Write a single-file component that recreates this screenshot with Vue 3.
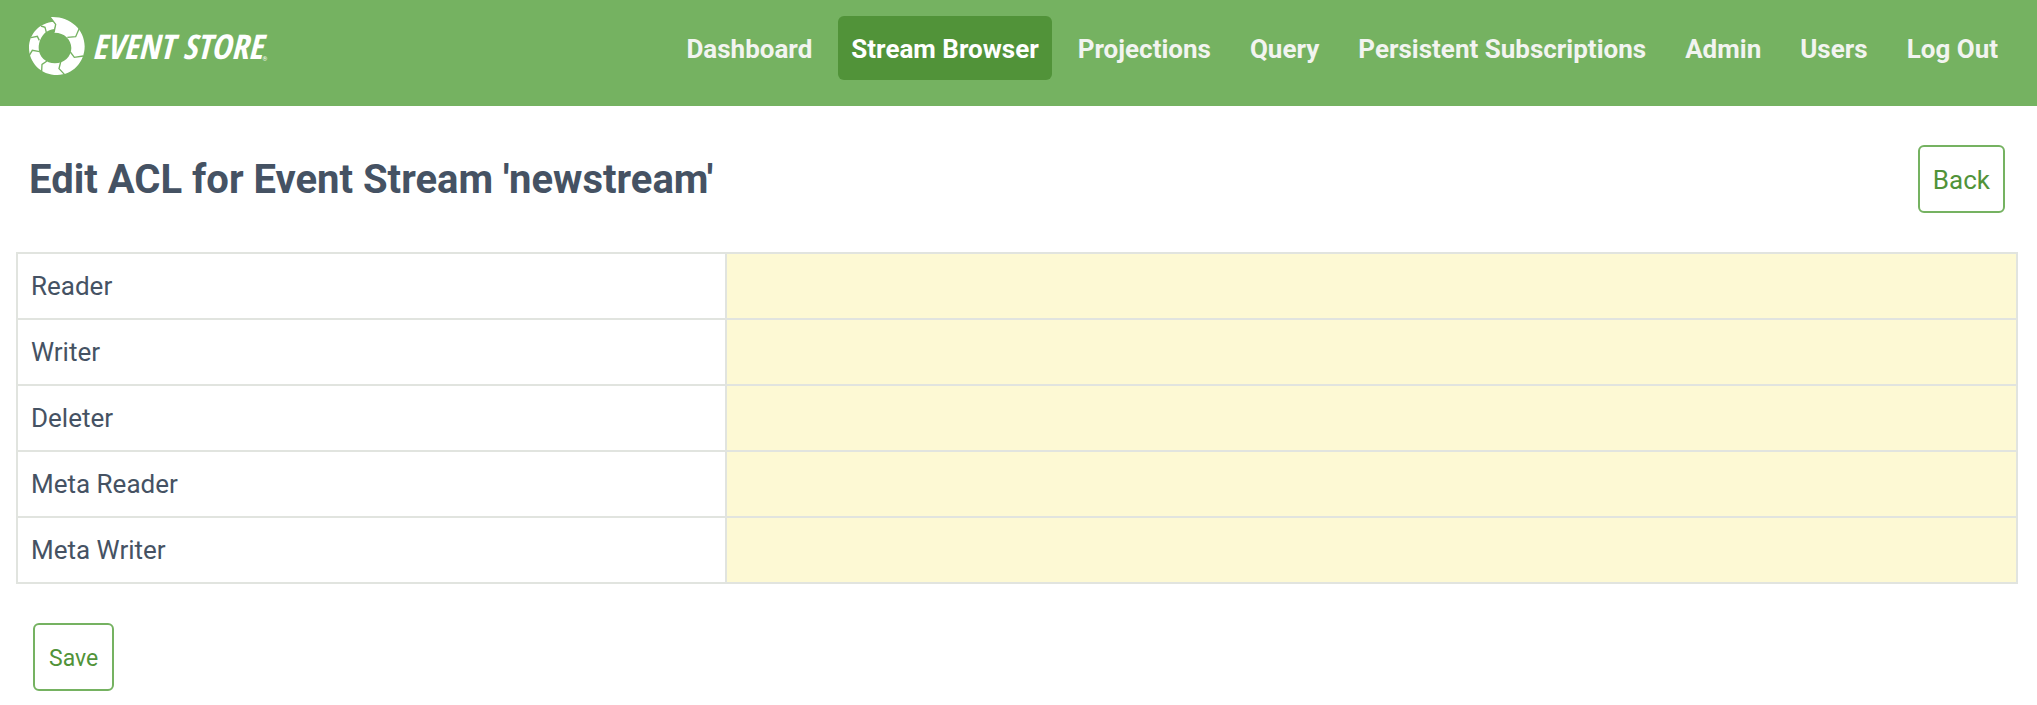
<script setup>
import { reactive } from 'vue'

const links = [
  'Dashboard',
  'Stream Browser',
  'Projections',
  'Query',
  'Persistent Subscriptions',
  'Admin',
  'Users',
  'Log Out',
]
const active = 'Stream Browser'

const fields = reactive([
  { id: 'reader', label: 'Reader', value: '' },
  { id: 'writer', label: 'Writer', value: '' },
  { id: 'deleter', label: 'Deleter', value: '' },
  { id: 'meta-reader', label: 'Meta Reader', value: '' },
  { id: 'meta-writer', label: 'Meta Writer', value: '' },
])
</script>

<template>
  <div class="page">
    <header class="header">
      <a class="logo" href="#">
        <svg class="mark" viewBox="27 34 168 178" aria-hidden="true">
          <path
            fill="#fff"
            d="M90 36C148 32 194 72 194 124C194 172 158 210 112 210C62 210 27 172 27 128C27 86 60 52 102 50L107 58L103 72C92 73 84 77 77 82C64 93 56 111 56 129C56 155 78 175 105 175C132 175 154 155 154 129C154 103 132 82 102 83L107 59Z"
          />
          <g class="seams">
            <path d="M178 70L167 95L142 97" />
            <path d="M190 153L163 157L151 141" />
            <path d="M134 209L117 191L122 171" />
            <path d="M65 198L66 178L81 168" />
            <path d="M28 151L37 136L59 140" />
            <path d="M33 98L52 94L58 106" />
            <path d="M63 63L75 67L79 82" />
            <path d="M90 36L107 58L102 83" />
          </g>
        </svg>
        <span class="wordmark">EVENT STORE</span><span class="reg">®</span>
      </a>
      <nav class="nav">
        <a
          v-for="link in links"
          :key="link"
          href="#"
          class="nav-link"
          :class="{ active: link === active }"
        >{{ link }}</a>
      </nav>
    </header>

    <main class="main">
      <div class="title-row">
        <h1 class="title">Edit ACL for Event Stream 'newstream'</h1>
        <a class="button back" href="#">Back</a>
      </div>
      <form @submit.prevent>
        <table class="acl">
          <tbody>
            <tr v-for="field in fields" :key="field.id">
              <th scope="row"><label :for="field.id">{{ field.label }}</label></th>
              <td><input :id="field.id" v-model="field.value" type="text" /></td>
            </tr>
          </tbody>
        </table>
        <button class="button save" type="submit">Save</button>
      </form>
    </main>
  </div>
</template>

<style>
body {
  margin: 0;
  background: #fff;
}
</style>

<style scoped>
.page {
  font-family: Roboto, "Liberation Sans", sans-serif;
  font-size: 26px;
  line-height: 40px;
  color: #455263;
}
.header {
  display: flex;
  justify-content: space-between;
  align-items: flex-start;
  padding: 16px 26px 26px 29px;
  background: #75b261;
}
.logo {
  display: flex;
  align-items: center;
  color: #fff;
  text-decoration: none;
}
.mark {
  width: 56px;
  height: 60px;
  margin-right: 7px;
}
.seams {
  fill: none;
  stroke: #75b261;
  stroke-width: 4;
}
.wordmark {
  font-family: "Open Sans Condensed", "Roboto Condensed", Roboto, sans-serif;
  font-size: 34px;
  font-weight: 700;
  font-style: italic;
  white-space: nowrap;
}
.reg {
  align-self: flex-end;
  font-size: 6px;
  line-height: 34px;
}
.nav {
  display: flex;
  gap: 13px;
}
.nav-link {
  padding: 13px 13px 11px;
  border-radius: 6px;
  color: #f2f4f0;
  font-weight: 700;
  text-decoration: none;
  white-space: nowrap;
}
.nav-link.active {
  background: #519339;
  color: #fff;
}
.main {
  padding: 39px 19px 14px 16px;
}
.title-row {
  display: flex;
  justify-content: space-between;
  align-items: center;
  padding: 0 13px 39px;
}
.title {
  margin: 0;
  padding-top: 2px;
  font-size: 40px;
  line-height: 48px;
  font-weight: 700;
}
.button {
  box-sizing: border-box;
  display: inline-block;
  padding: 13px 13px 11px;
  border: 2px solid #75b261;
  border-radius: 6px;
  background: #fff;
  color: #519339;
  font-family: inherit;
  font-size: 26px;
  line-height: 40px;
  text-decoration: none;
}
.acl {
  width: 100%;
  table-layout: fixed;
  border-collapse: collapse;
}
.acl th,
.acl td {
  height: 64px;
  padding: 0;
  border: 2px solid #e1e4df;
}
.acl th {
  width: 35.35%;
  font-weight: 400;
  text-align: left;
}
.acl label {
  display: block;
  padding: 0 13px;
}
.acl td {
  background: #fdf9d4;
}
.acl input {
  display: block;
  box-sizing: border-box;
  width: 100%;
  height: 64px;
  padding: 0 13px;
  border: 0;
  outline: 0;
  background: transparent;
  color: inherit;
  font: inherit;
}
.save {
  margin: 39px 0 0 17px;
  padding: 14px 14px 10px;
  font-size: 23px;
}
</style>
